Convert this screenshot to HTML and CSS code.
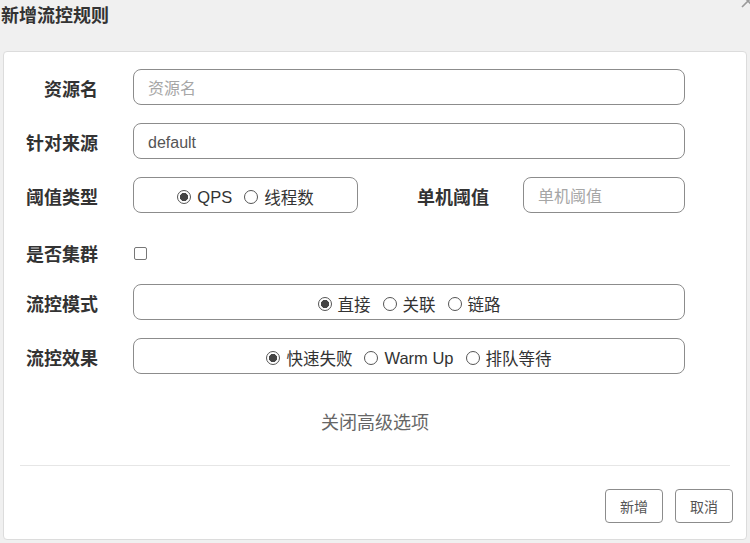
FILE: index.html
```html
<!DOCTYPE html>
<html lang="zh-CN">
<head>
   <meta charset="UTF-8">
   <meta name="viewport" content="width=device-width, initial-scale=1">
   <link rel="stylesheet" href="styles.css">
   <title>新增流控规则</title>
</head>

<body>

   <div class="cabecalho">
      <h1>新增流控规则</h1>
      <svg class="fechar" width="14" height="14" viewBox="0 0 14 14">
         <path d="M1 1L13 13M13 1L1 13" stroke="#9a9a9a" stroke-width="1.6" fill="none"/>
      </svg>
   </div>

   <div class="cartao">
      <div class="formulario">
         <div class="linha">
            <label class="rotulo">资源名</label>
            <input class="campo" type="text" placeholder="资源名">
         </div>

         <div class="linha">
            <label class="rotulo">针对来源</label>
            <input class="campo" type="text" value="default">
         </div>

         <div class="linha">
            <label class="rotulo">阈值类型</label>
            <div class="grupo curto">
               <span class="opcao marcada">QPS</span>
               <span class="opcao">线程数</span>
            </div>
            <label class="rotulo meio">单机阈值</label>
            <input class="campo pequeno" type="text" placeholder="单机阈值">
         </div>

         <div class="linha baixa">
            <label class="rotulo">是否集群</label>
            <span class="caixa"></span>
         </div>

         <div class="linha">
            <label class="rotulo">流控模式</label>
            <div class="grupo">
               <span class="opcao marcada">直接</span>
               <span class="opcao">关联</span>
               <span class="opcao">链路</span>
            </div>
         </div>

         <div class="linha">
            <label class="rotulo">流控效果</label>
            <div class="grupo">
               <span class="opcao marcada">快速失败</span>
               <span class="opcao">Warm Up</span>
               <span class="opcao">排队等待</span>
            </div>
         </div>
      </div>

      <div class="avancado">关闭高级选项</div>

      <div class="divisor"></div>

      <div class="rodape">
         <button class="botao">新增</button>
         <button class="botao">取消</button>
      </div>
   </div>

</body>
</html>
```

FILE: styles.css
```css
* {
   margin:0;
   padding:0;
   box-sizing:border-box;
   font-family:"Liberation Sans", "Noto Sans CJK SC", sans-serif;
}

body {
   background:#f0f0f0;
   color:#333;
   width:750px;
   height:543px;
   overflow:hidden;
   position:relative;
}

.cabecalho {
   height:51px;
   padding:6px 1px;
}

.cabecalho h1 {
   font-size:18px;
   line-height:20px;
   font-weight:bold;
   color:#333;
}

.fechar {
   position:absolute;
   right:-5px;
   top:-6px;
}

.cartao {
   background:#fff;
   border:1px solid #dcdcdc;
   border-radius:4px;
   margin:0 3px;
   height:489px;
}

.formulario {
   padding:17px 61px 0 16px;
}

.linha {
   display:flex;
   align-items:center;
   height:36px;
   margin-bottom:18px;
}

.linha.baixa {
   height:34px;
   margin-top:23px;
   margin-bottom:14px;
}

.rotulo {
   width:78px;
   margin-right:35px;
   padding-top:2px;
   text-align:right;
   font-size:18px;
   font-weight:bold;
   color:#333;
   white-space:nowrap;
}

.linha.baixa .rotulo {
   padding-top:0;
}

.rotulo.meio {
   width:auto;
   flex:1;
   margin-right:34px;
}

.campo {
   flex:1;
   height:36px;
   border:1px solid #8c8c8c;
   border-radius:8px;
   padding:3px 14px 0;
   font-size:16px;
   color:#555;
   background:#fff;
}

.campo::placeholder {
   color:#a6a6a6;
}

.campo.pequeno {
   flex:none;
   width:162px;
}

.grupo {
   flex:1;
   height:36px;
   border:1px solid #8c8c8c;
   border-radius:8px;
   padding-top:4px;
   display:flex;
   align-items:center;
   justify-content:center;
   gap:12px;
   font-size:16.5px;
   color:#333;
}

.grupo.curto {
   flex:none;
   width:225px;
}

.opcao {
   display:flex;
   align-items:center;
   gap:6px;
   white-space:nowrap;
}

.opcao::before {
   content:"";
   width:14px;
   height:14px;
   border:1.5px solid #555;
   border-radius:50%;
   box-sizing:border-box;
}

.opcao.marcada::before {
   background:radial-gradient(circle, #444 0, #444 3.8px, #fff 4.4px);
}

.caixa {
   width:13px;
   height:13px;
   margin-left:1px;
   border:1px solid #777;
   border-radius:2px;
}

.avancado {
   margin-top:37px;
   text-align:center;
   font-size:18px;
   line-height:24px;
   color:#666;
}

.divisor {
   margin:30px 16px 0;
   height:1px;
   background:#e6e6e6;
}

.rodape {
   display:flex;
   justify-content:flex-end;
   gap:12px;
   padding:23px 13px 0 0;
}

.botao {
   width:58px;
   height:34px;
   background:#fff;
   border:1px solid #8c8c8c;
   border-radius:4px;
   font-size:14px;
   color:#555;
}
```
